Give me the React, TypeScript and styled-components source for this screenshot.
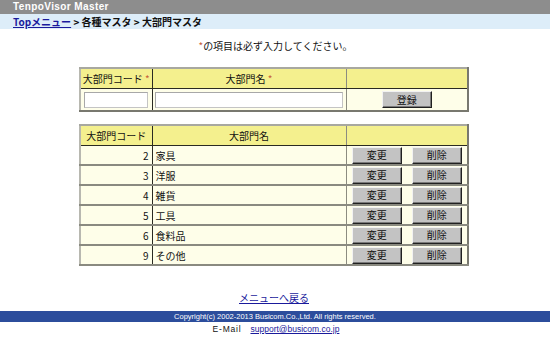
import React from 'react';
import styled, { createGlobalStyle } from 'styled-components';

const GlobalStyle = createGlobalStyle`
  html, body {
    margin: 0;
    padding: 0;
    background: #ffffff;
  }
  body {
    font-family: "Noto Sans CJK JP", "Liberation Sans", sans-serif;
    font-size: 10px;
    color: #111;
  }
`;

const Page = styled.div`
  width: 550px;
  height: 346px;
  display: flex;
  flex-direction: column;
  overflow: hidden;
`;

const TitleBar = styled.div`
  height: 14px;
  background: #8d8d8d;
  color: #fff;
  font-family: "Liberation Sans", sans-serif;
  font-weight: bold;
  font-size: 10px;
  line-height: 14px;
  padding-left: 13px;
  letter-spacing: 0.4px;
`;

const Crumbs = styled.div`
  height: 15px;
  background: #ddedf9;
  line-height: 15px;
  padding-left: 13px;
  font-size: 10px;
  font-weight: bold;
  color: #111;
`;

const CrumbLink = styled.a`
  color: #1a1a9c;
  text-decoration: underline;
`;

const Notice = styled.div`
  margin-top: 10px;
  text-align: center;
  font-size: 10px;
  line-height: 14px;
  padding-left: 1px;
`;

const Star = styled.span`
  color: #c8603a;
`;

const Grid = styled.table<{ $top: number }>`
  margin: ${(p) => p.$top}px auto 0 79px;
  width: 390px;
  border-collapse: collapse;
  table-layout: fixed;
  border-top: 2px solid #a8a8a0;
  border-left: 2px solid #b8b8b0;
  border-right: 2px solid #78786f;
  border-bottom: 2px solid #78786f;
`;

const Head = styled.th<{ $dark?: boolean }>`
  height: 19px;
  padding: 0;
  background: #f4f08e;
  font-weight: normal;
  font-size: 10px;
  text-align: center;
  border-right: 1px solid ${(p) => (p.$dark ? '#2a2a22' : '#8c8c80')};
  border-bottom: 1px solid #2a2a22;
`;

const Cell = styled.td<{ $align?: 'left' | 'right' | 'center'; $dark?: boolean }>`
  height: 18px;
  padding: 0 3px;
  background: #fefee9;
  font-size: 10px;
  text-align: ${(p) => p.$align || 'left'};
  border-right: 1px solid ${(p) => (p.$dark ? '#2a2a22' : '#8c8c80')};
  border-bottom: 2px solid #8a8a80;
  white-space: nowrap;
`;

const InputCell = styled.td<{ $dark?: boolean }>`
  height: 21px;
  padding: 0;
  background: #fefee9;
  text-align: center;
  border-right: 1px solid ${(p) => (p.$dark ? '#2a2a22' : '#8c8c80')};
`;

const TextBox = styled.input<{ $w: number }>`
  box-sizing: border-box;
  width: ${(p) => p.$w}px;
  height: 16px;
  margin: 0;
  padding: 0;
  border: 1px solid #c4c4c4;
  border-top-color: #a8a8a8;
  border-left-color: #a8a8a8;
  background: #fff;
  vertical-align: middle;
`;

const Buttons = styled.div`
  display: flex;
  justify-content: center;
  gap: 10px;
`;

const Btn = styled.button`
  box-sizing: border-box;
  width: 50px;
  height: 17px;
  padding: 0;
  margin: 0;
  background: #c3c3c3;
  border: 1px solid;
  border-color: #f2f2f2 #202020 #202020 #f2f2f2;
  box-shadow: inset -1px -1px 0 #7a7a7a;
  font-family: "Noto Sans CJK JP", sans-serif;
  font-size: 10px;
  line-height: 14px;
  color: #111;
  vertical-align: middle;
`;

const BackLink = styled.a`
  margin-top: 25px;
  align-self: center;
  margin-left: -2px;
  font-size: 10px;
  line-height: 14px;
  color: #1a1a9c;
  text-decoration: underline;
`;

const Footer = styled.div`
  margin-top: 6px;
  height: 11px;
  background: #2c4d9c;
  color: #fff;
  text-align: center;
  font-family: "Liberation Sans", sans-serif;
  font-size: 7.5px;
  line-height: 11px;
`;

const Mail = styled.div`
  margin-top: 1px;
  text-align: center;
  font-family: "Liberation Sans", sans-serif;
  font-size: 8.5px;
  line-height: 12px;
  padding-left: 2px;
`;

const MailLabel = styled.span`
  letter-spacing: 0.8px;
`;

const MailLink = styled.a`
  margin-left: 9px;
  color: #1a1a9c;
  text-decoration: underline;
`;

const rows = [
  { code: 2, name: '家具' },
  { code: 3, name: '洋服' },
  { code: 4, name: '雑貨' },
  { code: 5, name: '工具' },
  { code: 6, name: '食料品' },
  { code: 9, name: 'その他' },
];

export default function App() {
  return (
    <Page>
      <GlobalStyle />
      <TitleBar>TenpoVisor Master</TitleBar>
      <Crumbs>
        <CrumbLink href="#">Topメニュー</CrumbLink> &gt; 各種マスタ &gt; 大部門マスタ
      </Crumbs>
      <Notice>
        <Star>*</Star>の項目は必ず入力してください。
      </Notice>

      <Grid $top={14}>
        <colgroup>
          <col style={{ width: 72 }} />
          <col style={{ width: 194 }} />
          <col />
        </colgroup>
        <thead>
          <tr>
            <Head $dark>
              大部門コード <Star>*</Star>
            </Head>
            <Head>
              大部門名 <Star>*</Star>
            </Head>
            <Head />
          </tr>
        </thead>
        <tbody>
          <tr>
            <InputCell $dark>
              <TextBox $w={64} />
            </InputCell>
            <InputCell>
              <TextBox $w={188} />
            </InputCell>
            <InputCell>
              <Btn>登録</Btn>
            </InputCell>
          </tr>
        </tbody>
      </Grid>

      <Grid $top={12}>
        <colgroup>
          <col style={{ width: 72 }} />
          <col style={{ width: 194 }} />
          <col />
        </colgroup>
        <thead>
          <tr>
            <Head $dark>大部門コード</Head>
            <Head>大部門名</Head>
            <Head />
          </tr>
        </thead>
        <tbody>
          {rows.map((r) => (
            <tr key={r.code}>
              <Cell $align="right" $dark>
                {r.code}
              </Cell>
              <Cell>{r.name}</Cell>
              <Cell $align="center">
                <Buttons>
                  <Btn>変更</Btn>
                  <Btn>削除</Btn>
                </Buttons>
              </Cell>
            </tr>
          ))}
        </tbody>
      </Grid>

      <BackLink href="#">メニューへ戻る</BackLink>
      <Footer>Copyright(c) 2002-2013 Busicom.Co.,Ltd. All rights reserved.</Footer>
      <Mail>
        <MailLabel>E-Mail</MailLabel>
        <MailLink href="#">support@busicom.co.jp</MailLink>
      </Mail>
    </Page>
  );
}
